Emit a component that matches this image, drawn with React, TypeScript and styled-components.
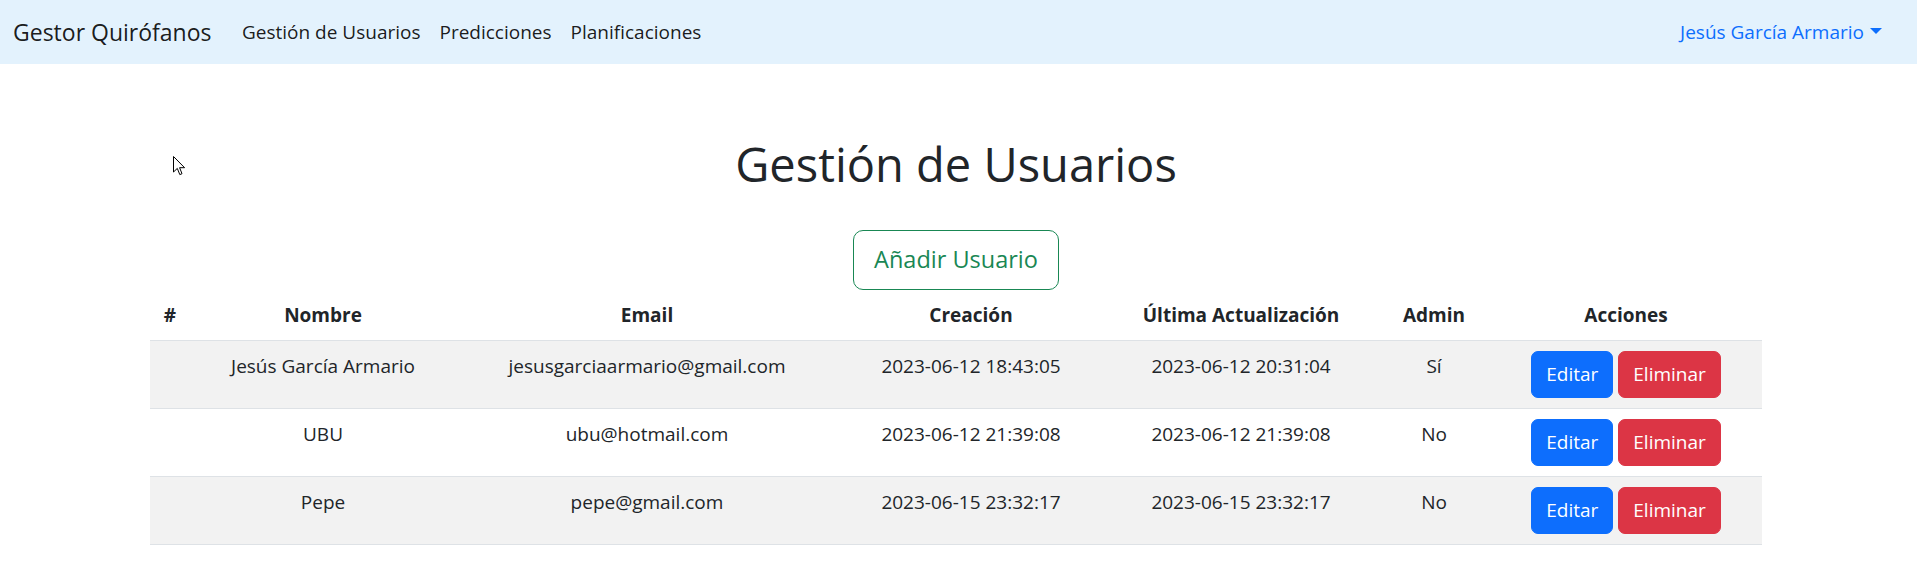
import React from "react";
import styled, { createGlobalStyle } from "styled-components";

const GlobalStyle = createGlobalStyle`
  * { box-sizing: border-box; }
  html, body { margin: 0; padding: 0; background: #fff; }
  body {
    font-family: "Open Sans", "Noto Sans", "DejaVu Sans", sans-serif;
    color: #212529;
    font-size: 19px;
    line-height: 30px;
  }
`;

const Page = styled.div`
  position: relative;
  min-height: 574px;
`;

const Navbar = styled.nav`
  height: 64px;
  background: #e3f2fd;
  display: flex;
  align-items: center;
  padding: 0 25px 0 13px;
`;

const Brand = styled.a`
  font-size: 23px;
  line-height: 36px;
  color: rgba(0, 0, 0, 0.9);
  margin-right: 21px;
  text-decoration: none;
  white-space: nowrap;
`;

const NavList = styled.ul`
  display: flex;
  list-style: none;
  margin: 0;
  padding: 0;
`;

const NavLink = styled.a`
  display: block;
  padding: 0 9.5px;
  font-size: 19px;
  line-height: 30px;
  color: rgba(0, 0, 0, 0.9);
  text-decoration: none;
  white-space: nowrap;
`;

const UserMenu = styled.a`
  margin-left: auto;
  display: flex;
  align-items: center;
  padding: 0 10px;
  font-size: 19px;
  line-height: 30px;
  color: #0d6efd;
  text-decoration: none;
  white-space: nowrap;
`;

const Caret = styled.span`
  display: inline-block;
  width: 0;
  height: 0;
  margin-left: 6px;
  margin-top: -2px;
  border-top: 6px solid #0d6efd;
  border-left: 6px solid transparent;
  border-right: 6px solid transparent;
`;

const Container = styled.main`
  width: 1612px;
  margin: 0 auto 0 150px;
`;

const Title = styled.h1`
  margin: 72px 0 37px;
  font-size: 47px;
  line-height: 57px;
  font-weight: 400;
  text-align: center;
  color: #212529;
`;

const AddRow = styled.div`
  display: flex;
  justify-content: center;
`;

const OutlineButton = styled.button`
  font-family: inherit;
  font-size: 23.5px;
  line-height: 37.5px;
  padding: 10px 20px;
  color: #198754;
  background: transparent;
  border: 1px solid #198754;
  border-radius: 10px;
  cursor: pointer;
`;

const Table = styled.table`
  width: 100%;
  table-layout: fixed;
  border-collapse: collapse;
  vertical-align: top;
`;

const Th = styled.th`
  padding: 10px;
  font-weight: 700;
  font-size: 19px;
  line-height: 30px;
  text-align: center;
  vertical-align: bottom;
  border-bottom: 1px solid #dee2e6;
  white-space: nowrap;
`;

const Row = styled.tr`
  &:nth-child(odd) > td {
    background: #f2f2f2;
  }
`;

const Td = styled.td`
  padding: 10px;
  font-size: 19px;
  line-height: 30px;
  text-align: center;
  vertical-align: top;
  border-bottom: 1px solid #dee2e6;
  white-space: nowrap;
`;

const Actions = styled.div`
  display: flex;
  justify-content: center;
  gap: 5px;
`;

const SolidButton = styled.button<{ $variant: "primary" | "danger" }>`
  font-family: inherit;
  font-size: 19px;
  line-height: 30px;
  padding: 7.5px 14px;
  color: #fff;
  background: ${(p) => (p.$variant === "primary" ? "#0d6efd" : "#dc3545")};
  border: 1px solid ${(p) => (p.$variant === "primary" ? "#0d6efd" : "#dc3545")};
  border-radius: 7px;
  cursor: pointer;
`;

const Cursor = styled.svg`
  position: absolute;
  left: 173px;
  top: 156px;
`;

const columns = [40, 266, 382, 266, 274, 112, 272];
const headers = ["#", "Nombre", "Email", "Creación", "Última Actualización", "Admin", "Acciones"];

const users = [
  {
    name: "Jesús García Armario",
    email: "jesusgarciaarmario@gmail.com",
    created: "2023-06-12 18:43:05",
    updated: "2023-06-12 20:31:04",
    admin: "Sí",
  },
  {
    name: "UBU",
    email: "ubu@hotmail.com",
    created: "2023-06-12 21:39:08",
    updated: "2023-06-12 21:39:08",
    admin: "No",
  },
  {
    name: "Pepe",
    email: "pepe@gmail.com",
    created: "2023-06-15 23:32:17",
    updated: "2023-06-15 23:32:17",
    admin: "No",
  },
];

export default function App() {
  return (
    <Page>
      <GlobalStyle />
      <Navbar>
        <Brand href="#">Gestor Quirófanos</Brand>
        <NavList>
          <li><NavLink href="#">Gestión de Usuarios</NavLink></li>
          <li><NavLink href="#">Predicciones</NavLink></li>
          <li><NavLink href="#">Planificaciones</NavLink></li>
        </NavList>
        <UserMenu href="#">
          Jesús García Armario
          <Caret />
        </UserMenu>
      </Navbar>
      <Container>
        <Title>Gestión de Usuarios</Title>
        <AddRow>
          <OutlineButton>Añadir Usuario</OutlineButton>
        </AddRow>
        <Table>
          <colgroup>
            {columns.map((w, i) => (
              <col key={i} style={{ width: w }} />
            ))}
          </colgroup>
          <thead>
            <tr>
              {headers.map((h) => (
                <Th key={h}>{h}</Th>
              ))}
            </tr>
          </thead>
          <tbody>
            {users.map((u) => (
              <Row key={u.email}>
                <Td></Td>
                <Td>{u.name}</Td>
                <Td>{u.email}</Td>
                <Td>{u.created}</Td>
                <Td>{u.updated}</Td>
                <Td>{u.admin}</Td>
                <Td>
                  <Actions>
                    <SolidButton $variant="primary">Editar</SolidButton>
                    <SolidButton $variant="danger">Eliminar</SolidButton>
                  </Actions>
                </Td>
              </Row>
            ))}
          </tbody>
        </Table>
      </Container>
      <Cursor width="13" height="20" viewBox="0 0 13 20">
        <path
          d="M0.5 0.5 L0.5 16 L4.3 12.4 L6.8 18.6 L9 17.7 L6.6 11.7 L11.6 11.7 Z"
          fill="#fff"
          stroke="#000"
          strokeWidth="1"
          strokeLinejoin="miter"
        />
      </Cursor>
    </Page>
  );
}
